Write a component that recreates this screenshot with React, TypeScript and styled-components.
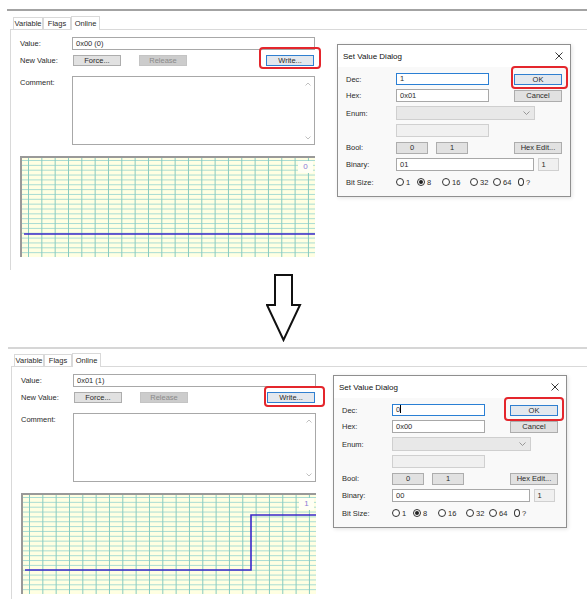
import React from 'react';
import styled, { createGlobalStyle, css } from 'styled-components';

const GlobalStyle = createGlobalStyle`
  html, body {
    margin: 0;
    padding: 0;
    background: #fff;
  }
  body {
    font-family: "Liberation Sans", Arial, sans-serif;
    font-size: 7.5px;
    color: #2a2a2a;
  }
`;

const Page = styled.div`
  width: 587px;
  height: 599px;
  overflow: hidden;
  padding-top: 9px;
  box-sizing: border-box;
`;

const Shot = styled.section<{ $height: number; $rule: string; $shift: number }>`
  position: relative;
  margin-left: ${(p) => 7 + p.$shift}px;
  height: ${(p) => p.$height}px;
  box-sizing: border-box;
  border-top: 2px solid ${(p) => p.$rule};
  display: flex;
  flex-direction: column;
`;

const TabStrip = styled.div<{ $height: number }>`
  display: flex;
  align-items: flex-end;
  height: ${(p) => p.$height}px;
  padding-left: 6px;
`;

const Tab = styled.div<{ $w: number; $active?: boolean }>`
  width: ${(p) => p.$w}px;
  height: 12px;
  box-sizing: border-box;
  border: 1px solid #d9d9d9;
  border-bottom: none;
  background: #fff;
  display: flex;
  align-items: center;
  justify-content: center;
  ${(p) =>
    p.$active &&
    css`
      height: 14px;
      margin-bottom: -1px;
      position: relative;
      z-index: 1;
    `}
`;

const TabBody = styled.div`
  flex: 1;
  margin-left: 3px;
  border-top: 1px solid #d9d9d9;
  border-left: 1px solid #d9d9d9;
  padding: 7px 0 0 9px;
`;

const FormRow = styled.div<{ $gap?: number }>`
  display: flex;
  align-items: flex-start;
  margin-top: ${(p) => p.$gap ?? 0}px;
`;

const FormLabel = styled.div<{ $lh: number }>`
  width: 52px;
  flex-shrink: 0;
  line-height: ${(p) => p.$lh}px;
`;

const TextBox = styled.div<{ $w: number; $h: number; $focus?: boolean; $off?: boolean }>`
  width: ${(p) => p.$w}px;
  height: ${(p) => p.$h}px;
  box-sizing: border-box;
  border: 1px solid #a8a8a8;
  background: #fff;
  padding-left: 3px;
  line-height: ${(p) => p.$h - 2}px;
  white-space: nowrap;
  ${(p) => p.$focus && css`border-color: #2a7fd4;`}
  ${(p) =>
    p.$off &&
    css`
      background: #f0f0f0;
      border-color: #d0d0d0;
    `}
`;

const Caret = styled.span`
  display: inline-block;
  width: 0;
  height: 8px;
  border-left: 1px solid #000;
  vertical-align: -1px;
`;

const ButtonRow = styled.div`
  width: 243px;
  display: flex;
  align-items: flex-start;
  gap: 18px;
  padding-left: 1px;
  box-sizing: border-box;
`;

const PushButton = styled.div<{ $w: number; $h: number; $kind?: 'default' | 'disabled' }>`
  width: ${(p) => p.$w}px;
  height: ${(p) => p.$h}px;
  box-sizing: border-box;
  border: 1px solid #adadad;
  background: #e1e1e1;
  display: flex;
  align-items: center;
  justify-content: center;
  white-space: nowrap;
  ${(p) =>
    p.$kind === 'default' &&
    css`
      border-color: #2f7fd0;
      background: #e3e8ee;
    `}
  ${(p) =>
    p.$kind === 'disabled' &&
    css`
      background: #cccccc;
      border-color: #c4c4c4;
      color: #8a8a8a;
    `}
`;

const Highlight = styled.div<{ $t: number; $r: number; $b: number; $l: number; $push?: boolean }>`
  position: relative;
  ${(p) => p.$push && css`margin-left: auto;`}
  &::after {
    content: '';
    position: absolute;
    top: ${(p) => -p.$t}px;
    right: ${(p) => -p.$r}px;
    bottom: ${(p) => -p.$b}px;
    left: ${(p) => -p.$l}px;
    border: 2px solid #e4262c;
    border-radius: 4px;
    pointer-events: none;
  }
`;

const CommentBox = styled.div`
  width: 243px;
  height: 69px;
  box-sizing: border-box;
  border: 1px solid #a8a8a8;
  background: #fff;
  display: flex;
  justify-content: flex-end;
`;

const ScrollRail = styled.div`
  width: 12px;
  display: flex;
  flex-direction: column;
  justify-content: space-between;
  align-items: center;
  padding: 5px 0 4px;
`;

const ChartBox = styled.div<{ $gap: number }>`
  position: relative;
  margin-top: ${(p) => p.$gap}px;
  width: 295px;
  height: 101px;
  box-sizing: border-box;
  border-top: 2px solid #999;
  border-left: 2px solid #999;
  background: #ffffe2;
  overflow: hidden;
`;

const ChartTag = styled.div`
  position: absolute;
  left: 276px;
  top: 3px;
  width: 15px;
  height: 12px;
  background: #fffff4;
  color: #8b7bd6;
  font-size: 8px;
  line-height: 12px;
  text-align: center;
`;

const ArrowRow = styled.div`
  height: 77px;
  padding: 4px 0 0 266px;
  box-sizing: border-box;
`;

/* dialog */

const Dialog = styled.div<{ $x: number; $y: number }>`
  position: absolute;
  left: ${(p) => p.$x}px;
  top: ${(p) => p.$y}px;
  width: 234px;
  height: 153px;
  box-sizing: border-box;
  border: 1px solid #8f8f8f;
  background: #f9f9f9;
  box-shadow: 1px 1px 4px rgba(0, 0, 0, 0.12);
  display: flex;
  flex-direction: column;
  z-index: 2;
`;

const TitleBar = styled.div`
  height: 22px;
  background: #fff;
  display: flex;
  align-items: center;
  justify-content: space-between;
  padding: 0 7px 0 5px;
  font-size: 8px;
  color: #111;
`;

const DialogBody = styled.div`
  display: flex;
  flex-direction: column;
  gap: 4px;
  padding: 6px 8px 0 8px;
`;

const DRow = styled.div<{ $h: number }>`
  height: ${(p) => p.$h}px;
  display: flex;
  align-items: center;
`;

const DLabel = styled.div`
  width: 50px;
  flex-shrink: 0;
`;

const Spacer = styled.div`
  flex: 1;
`;

const Combo = styled.div`
  width: 139px;
  height: 14px;
  box-sizing: border-box;
  border: 1px solid #cfcfcf;
  background: #e8e8e8;
  display: flex;
  align-items: center;
  justify-content: flex-end;
  padding-right: 4px;
`;

const Radios = styled.div`
  display: flex;
  align-items: center;
`;

const Radio = styled.div<{ $w: number }>`
  width: ${(p) => p.$w}px;
  display: flex;
  align-items: center;
  gap: 2px;
`;

const Dot = styled.span<{ $on?: boolean }>`
  width: 8px;
  height: 8px;
  box-sizing: border-box;
  border: 1px solid #333;
  border-radius: 50%;
  background: #fff;
  display: flex;
  align-items: center;
  justify-content: center;
  &::after {
    content: '';
    width: 4px;
    height: 4px;
    border-radius: 50%;
    background: ${(p) => (p.$on ? '#222' : 'transparent')};
  }
`;

const Chevron = ({ up }: { up?: boolean }) => (
  <svg width="6" height="4" viewBox="0 0 6 4">
    <polyline
      points={up ? '0.5,3.5 3,1 5.5,3.5' : '0.5,0.5 3,3 5.5,0.5'}
      fill="none"
      stroke="#b9b9b9"
      strokeWidth="0.9"
    />
  </svg>
);

const CloseGlyph = () => (
  <svg width="8" height="8" viewBox="0 0 8 8">
    <path d="M0.5 0.5 L7.5 7.5 M7.5 0.5 L0.5 7.5" stroke="#222" strokeWidth="0.9" />
  </svg>
);

const DownArrow = () => (
  <svg width="36" height="68" viewBox="0 0 36 68">
    <path
      d="M9 1 H26 V31 H34 L17.5 66 L1 31 H9 Z"
      fill="#fff"
      stroke="#111"
      strokeWidth="2"
      strokeLinejoin="miter"
    />
  </svg>
);

interface TrendProps {
  points: string;
  label: string;
  gap: number;
}

const Trend: React.FC<TrendProps> = ({ points, label, gap }) => {
  const cols = Array.from({ length: 22 }, (_, i) => 6.5 + i * 13.33);
  const rows = Array.from({ length: 21 }, (_, i) => 2.5 + i * 4.85);
  return (
    <ChartBox $gap={gap}>
      <svg width="293" height="99" viewBox="0 0 293 99">
        {rows.map((y) => (
          <line key={'r' + y} x1="0" x2="293" y1={y} y2={y} stroke="#a9dcd3" strokeWidth="1" />
        ))}
        {cols.map((x) => (
          <line key={'c' + x} x1={x} x2={x} y1="0" y2="99" stroke="#88cbc1" strokeWidth="1" />
        ))}
        <polyline points={points} fill="none" stroke="#3b28c9" strokeWidth="1.6" />
      </svg>
      <ChartTag>{label}</ChartTag>
    </ChartBox>
  );
};

interface SetValueProps {
  x: number;
  y: number;
  dec: string;
  hex: string;
  binary: string;
  caret?: boolean;
  ok: { t: number; r: number; b: number; l: number };
}

const SetValueDialog: React.FC<SetValueProps> = ({ x, y, dec, hex, binary, caret, ok }) => (
  <Dialog $x={x} $y={y}>
    <TitleBar>
      <span>Set Value Dialog</span>
      <CloseGlyph />
    </TitleBar>
    <DialogBody>
      <DRow $h={12}>
        <DLabel>Dec:</DLabel>
        <TextBox $w={93} $h={12} $focus>
          {dec}
          {caret && <Caret />}
        </TextBox>
        <Spacer />
        <Highlight $t={ok.t} $r={ok.r} $b={ok.b} $l={ok.l}>
          <PushButton $w={48} $h={11} $kind="default">
            OK
          </PushButton>
        </Highlight>
      </DRow>
      <DRow $h={13}>
        <DLabel>Hex:</DLabel>
        <TextBox $w={93} $h={13}>
          {hex}
        </TextBox>
        <Spacer />
        <PushButton $w={48} $h={12}>
          Cancel
        </PushButton>
      </DRow>
      <DRow $h={14}>
        <DLabel>Enum:</DLabel>
        <Combo>
          <svg width="7" height="4" viewBox="0 0 7 4">
            <polyline points="0.5,0.5 3.5,3.5 6.5,0.5" fill="none" stroke="#8d8d8d" strokeWidth="0.9" />
          </svg>
        </Combo>
      </DRow>
      <DRow $h={13}>
        <DLabel />
        <TextBox $w={93} $h={13} $off />
      </DRow>
      <DRow $h={13}>
        <DLabel>Bool:</DLabel>
        <PushButton $w={32} $h={12}>
          0
        </PushButton>
        <PushButton $w={32} $h={12} style={{ marginLeft: 8 }}>
          1
        </PushButton>
        <Spacer />
        <PushButton $w={48} $h={12}>
          Hex Edit...
        </PushButton>
      </DRow>
      <DRow $h={13}>
        <DLabel>Binary:</DLabel>
        <TextBox $w={138} $h={13}>
          {binary}
        </TextBox>
        <Spacer />
        <TextBox $w={21} $h={13} $off>
          1
        </TextBox>
        <Spacer />
      </DRow>
      <DRow $h={14}>
        <DLabel>Bit Size:</DLabel>
        <Radios>
          <Radio $w={21}>
            <Dot />1
          </Radio>
          <Radio $w={25}>
            <Dot $on />8
          </Radio>
          <Radio $w={28}>
            <Dot />
            16
          </Radio>
          <Radio $w={23}>
            <Dot />
            32
          </Radio>
          <Radio $w={25}>
            <Dot />
            64
          </Radio>
          <Radio $w={12}>
            <Dot />?
          </Radio>
        </Radios>
      </DRow>
    </DialogBody>
  </Dialog>
);

interface OnlinePanelProps {
  height: number;
  rule: string;
  shift: number;
  stripHeight: number;
  value: string;
  trend: string;
  trendLabel: string;
  write: { t: number; r: number; b: number; l: number };
  dialog: SetValueProps;
}

const OnlinePanel: React.FC<OnlinePanelProps> = (p) => (
  <Shot $height={p.height} $rule={p.rule} $shift={p.shift}>
    <TabStrip $height={p.stripHeight}>
      <Tab $w={30}>Variable</Tab>
      <Tab $w={28}>Flags</Tab>
      <Tab $w={29} $active>
        Online
      </Tab>
    </TabStrip>
    <TabBody>
      <FormRow>
        <FormLabel $lh={13}>Value:</FormLabel>
        <TextBox $w={243} $h={13}>
          {p.value}
        </TextBox>
      </FormRow>
      <FormRow $gap={5}>
        <FormLabel $lh={11}>New Value:</FormLabel>
        <ButtonRow>
          <PushButton $w={48} $h={11}>
            Force...
          </PushButton>
          <PushButton $w={48} $h={11} $kind="disabled">
            Release
          </PushButton>
          <Highlight $push $t={p.write.t} $r={p.write.r} $b={p.write.b} $l={p.write.l}>
            <PushButton $w={48} $h={11} $kind="default" style={{ marginRight: 1 }}>
              Write...
            </PushButton>
          </Highlight>
        </ButtonRow>
      </FormRow>
      <FormRow $gap={10}>
        <FormLabel $lh={13}>Comment:</FormLabel>
        <CommentBox>
          <ScrollRail>
            <Chevron up />
            <Chevron />
          </ScrollRail>
        </CommentBox>
      </FormRow>
      <Trend gap={11} points={p.trend} label={p.trendLabel} />
    </TabBody>
    <SetValueDialog {...p.dialog} />
  </Shot>
);

export default function App() {
  return (
    <>
      <GlobalStyle />
      <Page>
        <OnlinePanel
          height={261}
          rule="#a3a3a3"
          shift={0}
          stripHeight={18}
          value="0x00 (0)"
          trend="2,76 293,76"
          trendLabel="0"
          write={{ t: 8, r: 6, b: 3, l: 7 }}
          dialog={{
            x: 330,
            y: 33,
            dec: '1',
            hex: '0x01',
            binary: '01',
            ok: { t: 8, r: 6, b: 4, l: 3 },
          }}
        />
        <ArrowRow>
          <DownArrow />
        </ArrowRow>
        <OnlinePanel
          height={252}
          rule="#d6d6d6"
          shift={1}
          stripHeight={17}
          value="0x01 (1)"
          trend="2,75 228,75 228,20 293,20"
          trendLabel="1"
          write={{ t: 6, r: 9, b: 4, l: 3 }}
          dialog={{
            x: 325,
            y: 26,
            dec: '0',
            hex: '0x00',
            binary: '00',
            caret: true,
            ok: { t: 8, r: 6, b: 5, l: 6 },
          }}
        />
      </Page>
    </>
  );
}
